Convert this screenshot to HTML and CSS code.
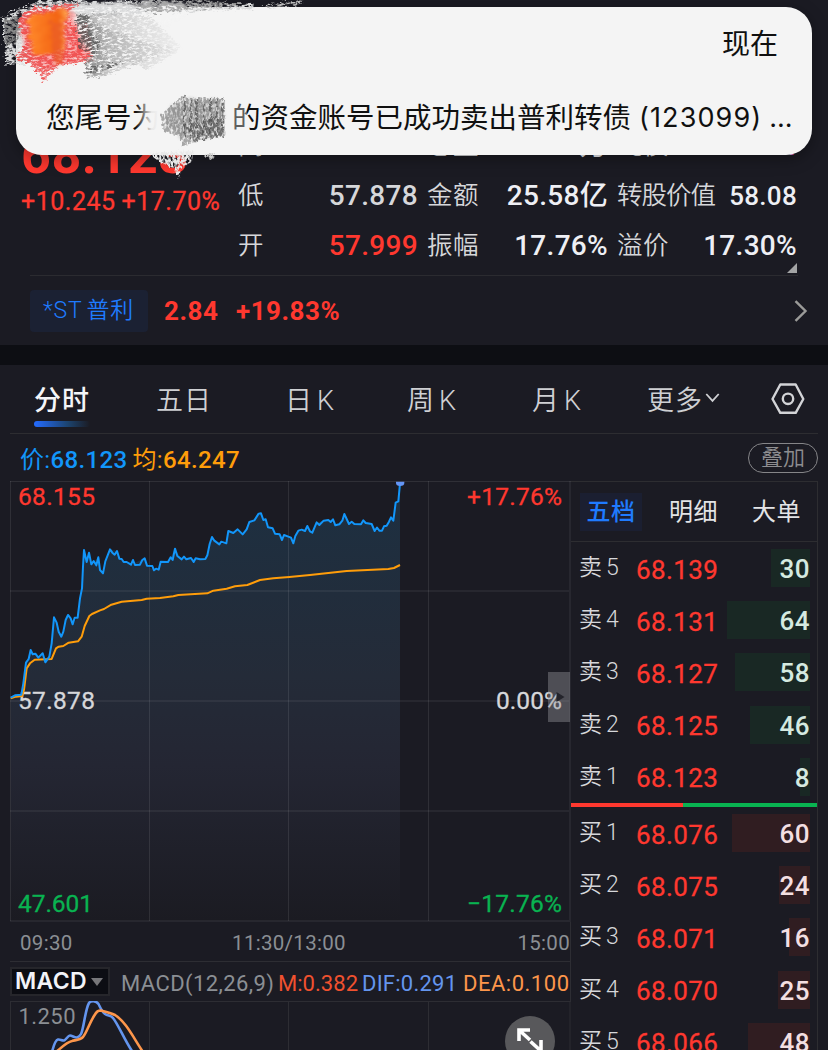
FILE: index.html
```html
<!DOCTYPE html>
<html lang="zh-CN">
<head>
<meta charset="utf-8">
<title>普利转债</title>
<link rel="stylesheet" href="styles.css">
</head>
<body>
<main class="app">
  <section class="quote">
    <div class="quote-main">
      <div class="last">
        <div class="last-price">68.123</div>
        <div class="last-change"><span>+10.245</span><span>+17.70%</span></div>
      </div>
      <div class="stats">
        <span class="k">高</span><span class="v red">68.155</span><span class="k">总量</span><span class="v">393.9万</span><span class="k">纯债</span><span class="v purple">94.74</span>
        <span class="k">低</span><span class="v soft">57.878</span><span class="k">金额</span><span class="v">25.58亿</span><span class="k tight">转股价值</span><span class="v small">58.08</span>
        <span class="k">开</span><span class="v red">57.999</span><span class="k">振幅</span><span class="v">17.76%</span><span class="k">溢价</span><span class="v">17.30%</span>
      </div>
      <svg class="corner" viewBox="0 0 10 10"><path d="M10 0V10H0Z" fill="#a3a4a5"/></svg>
    </div>
    <div class="stock">
      <span class="stock-name">*ST<i></i>普利</span><b class="stock-price">2.84</b><b class="stock-change">+19.83%</b>
      <svg class="chev" viewBox="0 0 14 22"><path d="M1.5 1.2 11.5 11 1.5 20.8" fill="none" stroke="#9b9b99" stroke-width="2.4"/></svg>
    </div>
  </section>

  <nav class="tabs">
    <span class="tab active">分时</span><span class="tab">五日</span><span class="tab">日<i></i>K</span><span class="tab">周<i></i>K</span><span class="tab">月<i></i>K</span>
    <span class="tab">更多<svg class="down" viewBox="0 0 14 10"><path d="M.8 1 7 7.8 13.2 1" fill="none" stroke="#d0d1d4" stroke-width="1.8"/></svg></span>
    <svg class="gear" viewBox="0 0 34 32"><path d="M9.3 1.5H24.7L32.3 16 24.7 29.8H9.3L1.5 16Z" fill="none" stroke="#d3d4d7" stroke-width="2.4" stroke-linejoin="round"/><circle cx="17" cy="15.8" r="5.2" fill="none" stroke="#d3d4d7" stroke-width="2.4"/></svg>
  </nav>

  <div class="legend"><span class="blue">价:<b>68.123</b></span><span class="orange">均:<b>64.247</b></span><span class="overlay">叠加</span></div>

  <div class="content">
    <section class="charts">
      <svg class="chart" viewBox="10 481 561 441">
        <defs>
          <linearGradient id="area" x1="0" y1="100" x2="0" y2="1323" gradientUnits="userSpaceOnUse">
            <stop offset="0" stop-color="#1e2f40"/><stop offset=".4" stop-color="#242b38"/><stop offset=".62" stop-color="#242633"/><stop offset="1" stop-color="#1b1b22"/>
          </linearGradient>
        </defs>
        <g transform="translate(0 480) scale(.33333)">
          <path fill="url(#area)" d="M32 653L45 646 64 644 70 610 78 548 92 510 106 521 115 533 128 520 136 547 148 530 155 490 162 412 170 428 184 470 204 405 218 433 233 413 246 325 252 210 260 246 267 218 274 253 295 232 300 270 309 280 330 208 351 213 358 236 371 246 393 254 434 235 441 257 462 271 476 269 482 245 504 246 525 206 545 238 616 237 636 171 658 193 679 190 685 153 700 159 713 148 728 163 748 126 763 121 783 100 804 142 818 145 825 161 839 163 846 180 852 165 873 173 880 190 895 152 915 153 922 138 937 158 950 127 985 120 1006 136 1027 122 1033 102 1047 132 1083 133 1090 121 1115 132 1124 153 1146 152 1167 125 1173 112 1180 122 1187 68 1195 64 1200 10V1323H32Z"/>
        </g>
        <g stroke="#fff" stroke-opacity=".09" fill="none">
          <path d="M10.5 481V921M149.5 481V921M288.500 481V921M428.500 481V921M10 481.500H571"/>
          <path stroke-width="2" stroke-opacity=".055" d="M570 481V922M10 591H570M10 701H570M10 811H570M10 921H570"/>
        </g>
        <g class="axis">
          <text class="red-f" x="18" y="505" textLength="77">68.155</text>
          <text x="18" y="709" textLength="77">57.878</text>
          <text class="green-f" x="18" y="912" textLength="75">47.601</text>
          <text class="red-f" x="467" y="505" textLength="95">+17.76%</text>
          <text x="496" y="709" textLength="66">0.00%</text>
          <text class="green-f" x="467" y="912" textLength="95">−17.76%</text>
        </g>
        <g transform="translate(0 480) scale(.33333)" fill="none" stroke-linejoin="round" stroke-width="6">
          <path stroke="#ff9d0a" d="M32 655L48 650 66 648 72 630 80 565 90 550 104 539 155 537 168 505 176 500 190 498 206 488 234 484 245 470 254 438 268 408 276 402 300 391 312 387 334 374 365 365 425 360 440 356 480 354 520 349 535 345 622 340 640 332 680 326 705 319 742 315 780 300 820 295 868 291 930 285 1040 273 1165 267 1182 264 1200 255"/>
          <path stroke="#1296fa" d="M32 653L45 646 64 644 70 610 78 548 86 537 92 510 98 523 106 521 115 533 128 520 136 547 148 530 155 490 162 412 170 428 176 455 184 470 190 455 197 420 204 405 212 415 218 433 224 413 233 413 240 355 246 325 249 260 252 210 260 246 267 218 274 253 281 243 289 256 295 232 300 270 309 280 316 244 323 226 330 208 337 218 344 224 351 213 358 236 365 237 371 246 380 246 393 254 399 240 405 255 420 254 427 240 434 235 441 257 457 258 462 271 468 266 476 269 482 245 504 246 512 232 518 240 525 206 532 228 545 238 552 230 559 238 573 234 581 246 587 235 600 238 616 237 622 226 629 192 636 171 643 182 658 193 664 185 679 190 685 153 700 159 713 148 728 163 740 148 748 126 763 121 776 101 783 100 790 120 797 118 804 142 818 145 825 161 839 163 846 180 852 165 865 170 873 173 880 190 886 168 895 152 905 149 915 153 922 138 930 154 937 158 950 127 958 135 971 122 985 120 992 126 999 118 1006 136 1018 133 1027 122 1033 102 1047 132 1055 125 1063 132 1083 133 1090 121 1097 129 1115 132 1124 153 1131 143 1138 152 1146 152 1152 139 1160 137 1167 125 1173 112 1180 122 1187 68 1195 64 1200 10"/>
          <path fill="#6495f5" stroke="none" d="M1188 5H1213V9A12.500 9 0 0 1 1188 9Z"/>
        </g>
        <rect x="548" y="672" width="22" height="50" fill="#9b9ba0" fill-opacity=".4"/>
        <path d="M556.500 692 564.500 697 556.500 702Z" fill="#24242b"/>
      </svg>
      <div class="times"><span>09:30</span><span>11:30/13:00</span><span>15:00</span></div>
      <div class="macd-bar">
        <span class="macd-select">MACD<svg class="caret" viewBox="0 0 12 8"><path d="M0 0H12L6 8Z" fill="#77777a"/></svg></span>
        <svg class="macd-values" viewBox="118 966 453 34">
          <text x="121" y="991.500" textLength="153" fill="#8b8f94">MACD(12,26,9)</text>
          <text x="278" y="991.500" textLength="80" fill="#f0512f">M:<tspan class="med">0.382</tspan></text>
          <text x="362" y="991.500" textLength="95" fill="#6495ee">DIF:<tspan class="med">0.291</tspan></text>
          <text x="463" y="991.500" textLength="106" fill="#fd964b">DEA:<tspan class="med">0.100</tspan></text>
        </svg>
      </div>
      <svg class="macd" viewBox="10 1001 561 49">
        <path d="M10.500 1001V1050M149.500 1001V1050M288.500 1001V1050M428.500 1001V1050M570 1001V1050M10 1001.500H571" stroke="#2d2d33" fill="none"/>
        <text x="18.500" y="1023.500" textLength="57">1.250</text>
        <g fill="none" stroke-width="2.600" stroke-linejoin="round">
          <path stroke="#6495ee" d="M52 1052C54 1044 56 1040 58 1039.500S62 1041 64 1040.500 68 1035.500 70 1035.500 75 1038 77 1037.500 80 1036 81 1034C84 1028 85 1010 89 1003 91 1000.500 96 1000.500 98.500 1004 100 1007 102 1012 105 1014S111 1015 113 1018C118 1024 125 1041 132 1051"/>
          <path stroke="#fd964b" d="M56 1052C62 1047 67 1042 72 1041 76 1040 80 1040 83 1037 87 1032 89 1024 94 1016 97 1011 98 1010.500 101 1010.500 105 1011.500 110 1012.500 115 1015 126 1022 133 1037 143 1052"/>
        </g>
        <circle cx="530" cy="1041" r="25" fill="#58585b"/>
        <g fill="none" stroke="#fff" stroke-width="3.600"><path d="M519 1041V1030H530M519 1030 530 1040M530.500 1041.500 541 1051M541 1040V1053"/></g>
      </svg>
    </section>

    <section class="book">
      <div class="book-tabs"><span class="on">五档</span><span>明细</span><span>大单</span></div>
      <div class="rows sell">
        <div class="row"><span class="lv">卖<i></i>5</span><span class="px">68.139</span><span class="qty"><em style="width:39px"></em>30</span></div>
        <div class="row"><span class="lv">卖<i></i>4</span><span class="px">68.131</span><span class="qty"><em style="width:83px"></em>64</span></div>
        <div class="row"><span class="lv">卖<i></i>3</span><span class="px">68.127</span><span class="qty"><em style="width:75px"></em>58</span></div>
        <div class="row"><span class="lv">卖<i></i>2</span><span class="px">68.125</span><span class="qty"><em style="width:60px"></em>46</span></div>
        <div class="row"><span class="lv">卖<i></i>1</span><span class="px">68.123</span><span class="qty"><em style="width:10px"></em>8</span></div>
      </div>
      <div class="ratio"></div>
      <div class="rows buy">
        <div class="row"><span class="lv">买<i></i>1</span><span class="px">68.076</span><span class="qty"><em style="width:78px"></em>60</span></div>
        <div class="row"><span class="lv">买<i></i>2</span><span class="px">68.075</span><span class="qty"><em style="width:31px"></em>24</span></div>
        <div class="row"><span class="lv">买<i></i>3</span><span class="px">68.071</span><span class="qty"><em style="width:21px"></em>16</span></div>
        <div class="row"><span class="lv">买<i></i>4</span><span class="px">68.070</span><span class="qty"><em style="width:32px"></em>25</span></div>
        <div class="row"><span class="lv">买<i></i>5</span><span class="px">68.066</span><span class="qty"><em style="width:62px"></em>48</span></div>
      </div>
    </section>
  </div>

  <aside class="notice">
    <div class="notice-time">现在</div>
    <div class="notice-text"><span>您尾号为</span><span class="rest">的资金账号已成功卖出普利转债</span><span class="code">(123099)</span><span class="dots">...</span></div>
  </aside>
  <svg class="scribble" viewBox="0 0 320 190">
    <defs>
      <filter id="chalk" x="-10%" y="-10%" width="120%" height="120%" color-interpolation-filters="sRGB">
        <feTurbulence type="fractalNoise" baseFrequency=".2 .5" numOctaves="4" seed="4" result="n"/>
        <feDisplacementMap in="SourceGraphic" in2="n" scale="10" xChannelSelector="R" yChannelSelector="G" result="d"/>
        <feColorMatrix in="n" type="matrix" values="0 0 0 0 0  0 0 0 0 0  0 0 0 0 0  4 0 0 0 -1.25" result="m"/>
        <feComposite in="d" in2="m" operator="in" result="c"/><feGaussianBlur in="c" stdDeviation=".6"/>
      </filter>
      <filter id="soft" x="-20%" y="-20%" width="140%" height="140%" color-interpolation-filters="sRGB">
        <feTurbulence type="fractalNoise" baseFrequency=".1 .25" numOctaves="3" seed="9" result="n"/>
        <feDisplacementMap in="SourceGraphic" in2="n" scale="12" xChannelSelector="R" yChannelSelector="G" result="d"/><feGaussianBlur in="d" stdDeviation="1.5"/>
      </filter>
      <filter id="pencil" x="-10%" y="-10%" width="120%" height="120%" color-interpolation-filters="sRGB">
        <feTurbulence type="fractalNoise" baseFrequency=".45 .25" numOctaves="3" seed="7" result="n"/>
        <feDisplacementMap in="SourceGraphic" in2="n" scale="5" xChannelSelector="R" yChannelSelector="G" result="d"/>
        <feColorMatrix in="n" type="matrix" values="0 0 0 0 0  0 0 0 0 0  0 0 0 0 0  4 0 0 0 -1.25" result="m"/>
        <feComposite in="d" in2="m" operator="in" result="c"/><feGaussianBlur in="c" stdDeviation=".6"/>
      </filter>
      <linearGradient id="flame"><stop offset="0" stop-color="#ff8a2b"/><stop offset=".75" stop-color="#f36312"/><stop offset="1" stop-color="#ffb05a"/></linearGradient>
      <linearGradient id="fade"><stop offset="0" stop-color="#777" stop-opacity=".8"/><stop offset=".3" stop-color="#999" stop-opacity=".45"/><stop offset="1" stop-color="#aaa" stop-opacity=".1"/></linearGradient>
      <linearGradient id="wipe"><stop offset="0" stop-color="#f4f4f4" stop-opacity="0"/><stop offset=".6" stop-color="#f4f4f4" stop-opacity=".95"/><stop offset="1" stop-color="#f4f4f4"/></linearGradient>
    </defs>
    <g transform="translate(2.500 0)">
      <g filter="url(#soft)"><path fill="#f4f4f4" d="M22 12 60 5 180 3 185 14 60 60 20 63Z"/></g>
      <g filter="url(#chalk)">
        <path fill="#d9dadb" d="M0 17 38 0 95 2 150 0 250 4 252 9 60 17 30 63 4 65Z"/>
        <path fill="#999" fill-opacity=".8" d="M125 2 190 0 250 4 210 8 150 13Z"/>
        <path fill="#bbb" d="M256 6 300 0 299 4 262 7Z"/>
        <path fill="#888" d="M2 22 18 15 18 40 4 48Z"/>
      </g>
      <g filter="url(#soft)"><path fill="#f66" fill-opacity=".5" d="M19 16 65 6 72 13 76 30 88 57 50 66 30 62 20 40Z"/></g>
      <g filter="url(#chalk)">
        <path fill="#ee4444" fill-opacity=".85" d="M15 20 28 8 77 3 66 12 70 25 86 23 92 61 57 65 41 82 30 66 12 58 23 45Z"/>
        <path fill="url(#fade)" d="M73 15 115 12 150 18 180 48 145 70 126 61 84 79 83 58 91 56 76 40Z"/>
        <path fill="url(#fade)" d="M84 20 135 40 175 49 95 78 82 66 96 52Z"/>
        <path fill="#4b4b4b" fill-opacity=".65" d="M74 16 90 14 84 25 98 43 94 57 78 49Z"/>
        <path fill="#555" fill-opacity=".75" d="M82 75 90 67 124 62 102 70Z"/>
      </g>
      <g filter="url(#soft)"><path fill="url(#flame)" d="M24 16 66 9 61 30 64 49 54 53 31 54 27 35Z"/><path fill="#e95c28" fill-opacity=".7" d="M48 20 60 20 60 65 51 63Z"/></g>
    </g>
    <rect x="136" y="100" width="26" height="36" fill="url(#wipe)"/><rect x="233" y="100" width="14" height="34" fill="#f4f4f4" fill-opacity=".35"/>
    <g filter="url(#soft)"><path fill="#bbb" fill-opacity=".65" d="M164 115 184 99 222 101 223 133 205 138 180 137 166 126Z"/></g>
    <g filter="url(#pencil)">
      <path fill="#666" fill-opacity=".55" d="M160 115 184 95 185 98 225 98 225 136 202 140 183 146 180 136 164 132Z"/>
      <path stroke="#555" stroke-opacity=".7" stroke-width="2" fill="none" d="M185 96V138M191 101V139M197 99V139M204 103V140M211 98V140M217 99V138M223 99V137"/>
      <path fill="#444" fill-opacity=".5" d="M184 125 223 116 222 136 194 141Z"/>
      <path fill="#e8e8e8" d="M148 153 194 151 192 161 181 169 179 179 173 168 158 161Z"/><path fill="#ccc" d="M204 154 216 154 211 161Z"/>
    </g>
  </svg>
</main>
</body>
</html>
```
FILE: styles.css
```css
* { box-sizing: border-box; }
body { margin: 0; background: #1b1b23; }
i, em, b { font-style: normal; }
.app {
  position: relative; width: 828px; height: 1050px; overflow: hidden;
  background: #1b1b23; color: #d6d7da;
  font-family: Roboto, "Noto Sans CJK SC", sans-serif;
  font-weight: 400;
}
.quote { height: 365px; border-bottom: 20px solid #0d0e13; padding-top: 119px; }
.quote-main { position: relative; height: 157px; margin: 0 31px 0 21px; display: flex; justify-content: space-between; }
.last { width: 210px; color: #ff382f; }
.last-price { font-size: 52px; font-weight: 700; line-height: 60px; height: 64px; letter-spacing: .6px; white-space: nowrap; padding-top: 3px; margin-top: 4px; }
.last-change { display: flex; gap: 6px; font-size: 25px; line-height: 30px; letter-spacing: .5px; white-space: nowrap; -webkit-text-stroke: .3px currentColor; }
.stats {
  width: 559px; height: 150px; display: grid; grid-template-rows: repeat(3, 50px);
  grid-template-columns: 53px 127px 67px 123px 95px 94px;
  align-items: center; white-space: nowrap; padding-top: 1px;
}
.k { font-size: 25.5px; line-height: 34px; font-weight: 350; letter-spacing: .6px; }
.stats .k:nth-child(6n+3), .stats .k:nth-child(6n+5) { padding-left: 9px; }
.k.tight { letter-spacing: -1px; }
.v { text-align: right; font-size: 28px; line-height: 34px; letter-spacing: .3px; font-weight: 500; color: #eeeff4; padding-top: 2px; }
.v.small { font-size: 26px; }
.v.soft { color: #d6d7da; }
.v.red { color: #ff382f; }
.v.purple { color: #c358b8; }
.corner { position: absolute; right: 0; bottom: 3px; width: 10px; height: 10px; }
.stock { margin: 0 20px 0 30px; height: 69px; display: flex; align-items: center; position: relative; }
.stock::before { content: ""; position: absolute; left: 0; right: 10px; top: -1px; height: 1px; background: #2b2b30; }
.stock-name { width: 118px; height: 42px; background: #1b2133; border-radius: 4px; color: #1f7bff; font-size: 23px; line-height: 42px; padding-left: 13px; font-weight: 350; letter-spacing: .8px; }
.stock-name i { display: inline-block; width: 4px; }
.stock-price, .stock-change { color: #ff382f; font-size: 26px; line-height: 30px; font-weight: 700; letter-spacing: .5px; }
.stock-price { margin-left: 16px; width: 72px; }
.chev { width: 14px; height: 22px; margin-left: auto; }
.tabs { height: 69px; display: flex; margin: 0 10px; border-bottom: 1px solid #2d2d31; padding-left: 24px; align-items: center; font-size: 27px; font-weight: 350; color: #cfd0d3; }
.tab { width: 125px; display: flex; align-items: baseline; white-space: nowrap; letter-spacing: 1px; padding-bottom: 2px; }
.tab:nth-child(2) { width: 129px; }
.tab:nth-child(3) { width: 122px; }
.tab:nth-child(5) { width: 115px; }
.tab i { width: 4px; }
.tab.active { width: 122px; height: 69px; align-items: center; color: #f4f5f8; font-weight: 500; position: relative; }
.tab.active::after { content: ""; position: absolute; left: 0; bottom: 7px; width: 56px; height: 6px; border-radius: 3px; background: linear-gradient(90deg, #246bff, #1c4470 60%, #1b1b23); }
.down { width: 15px; height: 10px; margin-left: 2px; align-self: center; }
.gear { width: 34px; height: 32px; margin-left: -1px; flex: none; }
.legend { height: 47px; margin: 0 10px -1px; padding: 0 0 0 10px; display: flex; align-items: center; gap: 5px; font-size: 24px; letter-spacing: .35px; }
.legend b { font-weight: 500; }
.blue { color: #1296fa; }
.orange { color: #ff9d0a; }
.overlay { margin: 0 0 0 auto; width: 70px; height: 30px; border: 1px solid #858588; border-radius: 15px; color: #8d8d90; font-size: 22px; line-height: 27px; text-align: center; font-weight: 350; letter-spacing: 0; }
.content { display: grid; grid-template-columns: 561px 247px; margin-left: 10px; height: 569px; margin-top: 1px; }
.charts { height: 569px; }
.chart { display: block; width: 561px; height: 441px; }
.axis { font-size: 24.5px; fill: #d6d7da; color: #d6d7da; stroke: #d6d7da; stroke-width: .3px; }
.axis .red-f { fill: #ff382f; stroke: #ff382f; }
.axis .green-f { fill: #09b351; stroke: #09b351; }
.times { height: 40px; border-bottom: 1px solid #2d2d33; border-right: 1px solid #2d2d33; padding: 2px 0 0 10px; display: flex; justify-content: space-between; align-items: center; color: #8b8f94; font-size: 20.5px; letter-spacing: .3px; }
.times span:nth-child(2) { margin-right: 12px; }
.macd-bar { height: 39px; display: flex; align-items: center; gap: 8px; border-right: 1px solid #2d2d33; }
.macd-select { width: 100px; height: 29px; border: 2px solid #26262b; background: #0c0d13; color: #f2f3f8; font-family: Inter, sans-serif; font-size: 23px; font-weight: 600; line-height: 25px; padding-left: 3px; flex: none; display: flex; align-items: center; gap: 4px; letter-spacing: .3px; }
.caret { width: 12px; height: 8px; }
.macd-values { width: 453px; height: 34px; flex: none; font-size: 22px; }
.med { stroke: currentColor; stroke-width: 0; }
.macd { display: block; width: 561px; height: 49px; font-size: 22px; }
.macd text { fill: #8b8f94; }
.book { height: 569px; overflow: hidden; border-top: 1px solid #2d2d31; border-right: 1px solid #2d2d31; }
.book-tabs { height: 60px; padding: 0 0 0 9px; display: grid; grid-template-columns: 89px 83px 1fr; align-items: center; border-bottom: 1px solid #2d2d31; font-size: 24px; color: #e3e4e6; letter-spacing: .5px; }
.book-tabs span { line-height: 38px; }
.book-tabs .on { width: 62px; background: #1b1f31; color: #1f7bff; font-weight: 500; text-align: center; }
.row { height: 52.2px; display: grid; grid-template-columns: 57px 90px 1fr; align-items: center; padding: 0 7px 0 8px; white-space: nowrap; }
.lv { display: flex; align-items: baseline; font-size: 23px; line-height: 32px; font-weight: 350; }
.lv i { width: 4px; }
.px { font-size: 26px; line-height: 32px; color: #ff382f; letter-spacing: .4px; padding-top: 3px; -webkit-text-stroke: .3px currentColor; }
.qty { position: relative; height: 38px; line-height: 40px; text-align: right; font-size: 26px; font-weight: 500; letter-spacing: .5px; color: #eeeff4; isolation: isolate; }
.qty em { position: absolute; right: 0; top: 0; height: 38px; z-index: -1; }
.sell em { background: #192824; }
.buy em { background: #301d21; }
.sell .qty { color: #d5eae0; }
.buy .qty { color: #f3dfe1; }
.ratio { height: 4px; background: linear-gradient(90deg, #ff382f 112px, #09b351 112px); margin-right: -1px; }
.notice { position: absolute; left: 16px; top: 7px; width: 796px; height: 148px; border-radius: 26px; background: #f4f4f4; color: #101010; box-shadow: 0 4px 16px rgba(0,0,0,.35); padding: 17px 20px 0 30px; font-family: Inter, "Noto Sans CJK SC", sans-serif; }
.notice-time { text-align: right; padding-right: 14px; font-size: 28px; line-height: 40px; }
.notice-text { display: flex; margin-top: 33px; font-size: 28.500px; line-height: 42px; white-space: nowrap; }
.rest { margin-left: 72px; }
.code { margin-left: 8px; font-size: 27px; letter-spacing: 1.1px; }
.dots { margin-left: 7px; font-size: 27px; }
.scribble { position: absolute; left: 0; top: 0; width: 320px; height: 190px; }
```
